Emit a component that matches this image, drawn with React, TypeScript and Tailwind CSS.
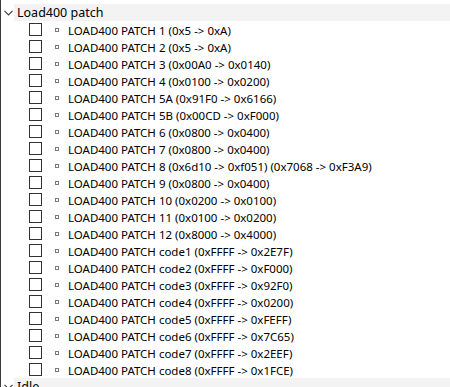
import React from "react";

const items = [
  "LOAD400 PATCH 1 (0x5 -> 0xA)",
  "LOAD400 PATCH 2 (0x5 -> 0xA)",
  "LOAD400 PATCH 3 (0x00A0 -> 0x0140)",
  "LOAD400 PATCH 4 (0x0100 -> 0x0200)",
  "LOAD400 PATCH 5A (0x91F0 -> 0x6166)",
  "LOAD400 PATCH 5B (0x00CD -> 0xF000)",
  "LOAD400 PATCH 6 (0x0800 -> 0x0400)",
  "LOAD400 PATCH 7 (0x0800 -> 0x0400)",
  "LOAD400 PATCH 8 (0x6d10 -> 0xf051) (0x7068 -> 0xF3A9)",
  "LOAD400 PATCH 9 (0x0800 -> 0x0400)",
  "LOAD400 PATCH 10 (0x0200 -> 0x0100)",
  "LOAD400 PATCH 11 (0x0100 -> 0x0200)",
  "LOAD400 PATCH 12 (0x8000 -> 0x4000)",
  "LOAD400 PATCH code1 (0xFFFF -> 0x2E7F)",
  "LOAD400 PATCH code2 (0xFFFF -> 0xF000)",
  "LOAD400 PATCH code3 (0xFFFF -> 0x92F0)",
  "LOAD400 PATCH code4 (0xFFFF -> 0x0200)",
  "LOAD400 PATCH code5 (0xFFFF -> 0xFEFF)",
  "LOAD400 PATCH code6 (0xFFFF -> 0x7C65)",
  "LOAD400 PATCH code7 (0xFFFF -> 0x2EEF)",
  "LOAD400 PATCH code8 (0xFFFF -> 0x1FCE)",
];

function Chevron() {
  return (
    <svg width="9" height="6" viewBox="0 0 9 6" className="shrink-0">
      <path d="M0.5 0.8 L4.5 4.8 L8.5 0.8" fill="none" stroke="#404040" strokeWidth="1.2" />
    </svg>
  );
}

function Header({ label }: { label: string }) {
  return (
    <div className="flex h-[17px] items-center">
      <div className="flex w-[13px] justify-end pr-[1px] pl-[2px]">
        <Chevron />
      </div>
      <div className="flex h-full flex-1 items-center bg-[#f3f3f3] pl-[3px]">
        <span className="pt-[1px] text-[12.5px] leading-none text-black">{label}</span>
      </div>
    </div>
  );
}

export default function App() {
  return (
    <div
      className="relative h-[387px] w-[450px] overflow-hidden bg-white border-l border-[#3c3c3c]"
      style={{ fontFamily: '"Noto Sans", "Open Sans", sans-serif' }}
    >
      <div className="h-[4px]" />
      <Header label="Load400 patch" />
      {items.map((t) => (
        <div key={t} className="flex h-[17px] items-center">
          <div className="ml-[28px] h-[13px] w-[13px] shrink-0 border border-[#333333] bg-white" />
          <div className="ml-[13px] h-[4px] w-[4px] shrink-0 border border-[#7a7a7a]" />
          <span className="ml-[9px] whitespace-nowrap pt-[2px] text-[11.5px] leading-none text-black">{t}</span>
        </div>
      ))}
      <Header label="Idle" />
    </div>
  );
}
